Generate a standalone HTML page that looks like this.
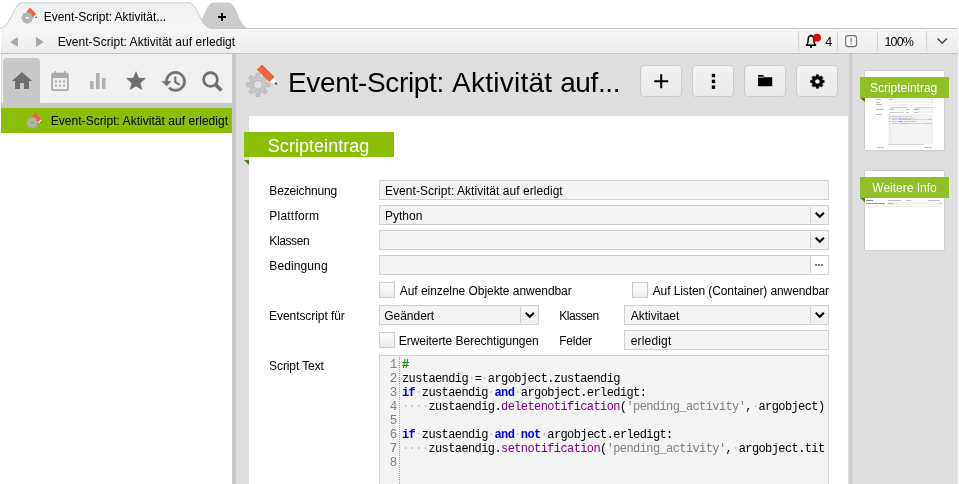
<!DOCTYPE html>
<html>
<head>
<meta charset="utf-8">
<title>Event-Script</title>
<style>
*{box-sizing:border-box;margin:0;padding:0}
html,body{width:959px;height:484px;overflow:hidden;background:#fff}
body{position:relative;font-family:"Liberation Sans",sans-serif;font-size:12px;color:#000}
.abs{position:absolute}
.t{position:absolute;white-space:nowrap;line-height:1}
/* top */
#tabstrip{left:0;top:0;width:959px;height:29px;background:#fff}
#navbar{left:1px;top:29px;width:957px;height:25px;background:linear-gradient(#f7f7f7,#ececec);border-bottom:1px solid #c2c2c2}
.vsep{position:absolute;top:2px;width:1px;height:20px;background:#d2d2d2}
/* sidebar */
#sidebar{left:1px;top:54px;width:231px;height:49px;background:#f0f0f0;border-left:1px solid #e0e0e0}
#hometab{left:3px;top:58px;width:37px;height:45px;background:#c8c8c8;border-radius:4px 4px 0 0}
#sidestrip{left:1px;top:103px;width:231px;height:5px;background:#c8c8c8}
#siderow{left:1px;top:108px;width:231px;height:25px;background:#8cbe08}
#split1{left:232px;top:54px;width:4px;height:430px;background:#c8c8c8}
/* content */
#content{left:236px;top:54px;width:612px;height:430px;background:#dedede}
#panel{left:249px;top:116px;width:599px;height:368px;background:#fff}
#split2{left:848px;top:54px;width:4px;height:430px;background:linear-gradient(to right,#dedede,#c6c6c6)}
#right{left:852px;top:54px;width:106px;height:430px;background:#dedede}
.btn{position:absolute;top:65px;width:42px;height:32px;border:1px solid #cbcbcb;border-radius:4px;background:linear-gradient(#f2f2f2,#e9e9e9)}
.field{position:absolute;height:20px;background:#f4f4f4;border:1px solid #d0d0d0}
.lbl{position:absolute;white-space:nowrap;line-height:14px;font-size:12px}
.cb{position:absolute;width:16px;height:16px;border:1px solid #cdcdcd;background:linear-gradient(#fdfdfd,#ececec)}
.dd{position:absolute;top:1px;right:0;width:18px;height:16px;border-left:1px solid #cfcfcf;background:linear-gradient(#f8f8f8,#eeeeee)}
.green{background:#8cbe08}
#code{position:absolute;left:379px;top:355px;width:450px;height:140px;background:#f4f4f4;border:1px solid #d0d0d0;overflow:hidden}
.ln{position:absolute;left:0;width:17px;text-align:right;color:#808080;font-family:"Liberation Mono",monospace;font-size:12.5px;letter-spacing:-0.3px;line-height:14px;white-space:pre}
.cl{position:absolute;left:22px;font-family:"Liberation Mono",monospace;font-size:12px;letter-spacing:-0.6px;line-height:14px;white-space:pre;color:#000}
.kw{color:#0000ff;font-weight:bold}
.cm{color:#008000;font-weight:bold}
.fn{color:#800080}
.st{color:#808080}
.ws{color:#bdbdbd}
.thumb{position:absolute;left:865px;width:79px;height:79px;background:#fff;box-shadow:0 0 1.5px rgba(0,0,0,.25)}
.thumb i,#th2marks i{position:absolute;display:block}
.thumb i{margin-left:-865px;margin-top:-71px}
.tlabel{position:absolute;left:860.3px;width:88.3px;height:20.9px;background:#90bf2a}
</style>
</head>
<body>
<div id="wrap" style="position:absolute;left:0;top:0;width:959px;height:484px;will-change:transform">
<svg width="0" height="0" style="position:absolute"><defs>
<symbol id="gpbig" viewBox="0 0 40 40">
  <path d="M15.80 17.11 L16.30 13.12 L19.70 13.12 L20.20 17.11 L21.88 17.81 L25.05 15.34 L27.46 17.75 L24.99 20.92 L25.69 22.60 L29.68 23.10 L29.68 26.50 L25.69 27.00 L24.99 28.68 L27.46 31.85 L25.05 34.26 L21.88 31.79 L20.20 32.49 L19.70 36.48 L16.30 36.48 L15.80 32.49 L14.12 31.79 L10.95 34.26 L8.54 31.85 L11.01 28.68 L10.31 27.00 L6.32 26.50 L6.32 23.10 L10.31 22.60 L11.01 20.92 L8.54 17.75 L10.95 15.34 L14.12 17.81 Z M18 20.5 a4.3 4.3 0 1 0 0.01 0 Z" fill="#c6c6c6" stroke="#b2b2b2" stroke-width="0.8" fill-rule="evenodd" stroke-linejoin="round"/>
  <g transform="translate(19.65 7.3) rotate(45)">
    <rect x="0" y="-3.3" width="17.3" height="6.6" fill="#e8683b" stroke="#d5562c" stroke-width="0.7"/>
    <path d="M17.3 -3.3 L25.2 0 L17.3 3.3 Z" fill="#fff"/>
    <path d="M22 -1.35 L25.4 0 L22 1.35 Z" fill="#444"/>
  </g>
</symbol>
<symbol id="gpsm" viewBox="0 0 24 24">
  <g transform="translate(12.4 5.5) rotate(45)">
    <rect x="0" y="-2.4" width="8.9" height="4.8" fill="#e8623a"/>
    <path d="M8.9 -2.4 L11.6 0 L8.9 2.4 Z" fill="#fff"/>
    <path d="M10.3 -1.2 L12 0 L10.3 1.2 Z" fill="#444"/>
  </g>
  <path d="M9.80 9.35 L10.20 8.31 L12.40 8.31 L12.80 9.35 L13.39 9.59 L14.40 9.14 L15.96 10.70 L15.51 11.71 L15.75 12.30 L16.79 12.70 L16.79 14.90 L15.75 15.30 L15.51 15.89 L15.96 16.90 L14.40 18.46 L13.39 18.01 L12.80 18.25 L12.40 19.29 L10.20 19.29 L9.80 18.25 L9.21 18.01 L8.20 18.46 L6.64 16.90 L7.09 15.89 L6.85 15.30 L5.81 14.90 L5.81 12.70 L6.85 12.30 L7.09 11.71 L6.64 10.70 L8.20 9.14 L9.21 9.59 Z M9.5 12.7 h3.6 v2.2 h-3.6 Z" fill="#b2b2b6" stroke="#a8a8ac" stroke-width="0.5" fill-rule="evenodd" stroke-linejoin="round"/>
</symbol>
</defs></svg>
<!-- TAB STRIP -->
<div id="tabstrip" class="abs">
<svg class="abs" style="left:0;top:0" width="959" height="29" viewBox="0 0 959 29">
  <defs><linearGradient id="tg" x1="0" y1="0" x2="0" y2="1"><stop offset="0" stop-color="#efefef"/><stop offset="1" stop-color="#f7f7f7"/></linearGradient></defs>
  <path d="M192 28.5 C204 28.5 204 2.5 214 2.5 L228 2.5 C238 2.5 238 28.5 250 28.5 Z" fill="#cbcbcb"/>
  <path d="M0 28.5 L958 28.5" fill="none" stroke="#c8c8c8" stroke-width="1"/>
  <path d="M-1 29 L-1 28.5 C11 28.5 13 2.5 23 2.5 L188 2.5 C198 2.5 200 28.5 212 28.5 L212 29 Z" fill="url(#tg)"/>
  <path d="M23 2.7 L188 2.7" fill="none" stroke="#dcdcdc" stroke-width="1.4"/>
  <path d="M-1 28.5 C11 28.5 13 2.5 23 2.5" fill="none" stroke="#c6c6c6" stroke-width="1"/>
  <path d="M188 2.5 C198 2.5 200 28.5 212 28.5" fill="none" stroke="#c6c6c6" stroke-width="1"/>
  <path d="M218 17 h8 M222 13 v8" stroke="#000" stroke-width="2" fill="none"/>
</svg>
<svg class="abs" style="left:16.3px;top:4.3px" width="24" height="24"><rect x="9.4" y="12.6" width="3.8" height="2.4" fill="#fff"/><use href="#gpsm"/></svg>
<span class="t" style="left:43.8px;top:10.6px;font-size:12px;letter-spacing:-0.04px">Event-Script: Aktivität...</span>
</div>

<!-- NAV BAR -->
<div id="navbar" class="abs">
<svg class="abs" style="left:0;top:0" width="60" height="24"><path d="M17 8 L9 13 L17 18 Z" fill="#a8a8a8"/><path d="M35 8 L43 13 L35 18 Z" fill="#a8a8a8"/></svg>
<span class="t" style="left:56.7px;top:6.5px;font-size:12px;letter-spacing:0.04px">Event-Script: Aktivität auf erledigt</span>
<div class="vsep" style="left:797px"></div>
<div class="vsep" style="left:836px"></div>
<div class="vsep" style="left:876px"></div>
<div class="vsep" style="left:925px"></div>
<svg class="abs" style="left:803px;top:4px" width="24" height="18" viewBox="804 33 24 18">
  <path d="M805.8 45.2 H816.2" stroke="#000" stroke-width="1.6" fill="none"/>
  <path d="M806.6 45 C808.2 43.6 808.2 41.5 808.2 39.6 C808.2 37 809.5 35.8 811 35.8 C812.5 35.8 813.8 37 813.8 39.6 C813.8 41.5 813.8 43.6 815.4 45" fill="none" stroke="#000" stroke-width="1.5"/>
  <path d="M811 34.8 V36 M811 45.6 V47.7" stroke="#000" stroke-width="2"/>
  <circle cx="817" cy="37.7" r="3.9" fill="#e60000"/>
</svg>
<span class="t" style="left:824.3px;top:6.5px;font-size:12.5px">4</span>
<svg class="abs" style="left:843px;top:5px" width="16" height="16" viewBox="0 0 16 16"><rect x="1.6" y="1.6" width="11" height="11" rx="2.6" fill="#f4f4f4" stroke="#707070" stroke-width="1.1"/><path d="M7.1 4.2 V8" stroke="#707070" stroke-width="1.1"/><rect x="6.5" y="9" width="1.2" height="1.2" fill="#707070"/></svg>
<span class="t" style="left:883.5px;top:6.6px;font-size:12.5px;letter-spacing:-0.85px">100%</span>
<svg class="abs" style="left:934px;top:7px" width="16" height="10" viewBox="0 0 16 10"><path d="M2.5 2.6 L7.2 7.2 L11.9 2.6" fill="none" stroke="#444" stroke-width="1.4"/></svg>
</div>

<!-- SIDEBAR -->
<div id="sidebar" class="abs"></div>
<div id="hometab" class="abs"></div>
<div id="sidestrip" class="abs"></div>
<div id="siderow" class="abs"></div>
<div id="split1" class="abs"></div>
<!-- sidebar icons -->
<svg class="abs" style="left:10px;top:69px" width="24" height="24" viewBox="0 0 24 24"><path d="M10 20v-6h4v6h5v-8h3L12 3 2 12h3v8z" fill="#6e6e6e"/></svg>
<svg class="abs" style="left:50px;top:70px" width="20" height="22" viewBox="0 0 20 22">
  <rect x="1.2" y="2.8" width="17.6" height="18.2" rx="2.2" fill="#aaa"/>
  <rect x="4.6" y="1" width="1.6" height="3" fill="#aaa"/><rect x="14" y="1" width="1.6" height="3" fill="#aaa"/>
  <rect x="3" y="8" width="14" height="11.2" fill="#f0f0f0"/>
  <g fill="#aaa"><rect x="5" y="10.4" width="2" height="2"/><rect x="9" y="10.4" width="2" height="2"/><rect x="13" y="10.4" width="2" height="2"/><rect x="5" y="14.6" width="2" height="2"/><rect x="9" y="14.6" width="2" height="2"/><rect x="13" y="14.6" width="2" height="2"/></g>
</svg>
<svg class="abs" style="left:88px;top:70px" width="20" height="22" viewBox="0 0 20 22"><g fill="#b2b2b2"><rect x="2" y="11" width="3.6" height="8"/><rect x="8" y="3" width="3.6" height="16"/><rect x="14" y="8" width="3.6" height="11"/></g></svg>
<svg class="abs" style="left:124.1px;top:68.9px" width="24" height="24" viewBox="0 0 24 24"><path d="M12 17.27L18.18 21l-1.64-7.03L22 9.24l-7.19-.61L12 2 9.19 8.63 2 9.24l5.46 4.73L5.82 21z" fill="#707070"/></svg>
<svg class="abs" style="left:161.4px;top:67.6px" width="26.8" height="26.8" viewBox="0 0 24 24"><path d="M13 3c-4.97 0-9 4.03-9 9H1l3.89 3.89.07.14L9 12H6c0-3.87 3.13-7 7-7s7 3.13 7 7-3.13 7-7 7c-1.93 0-3.68-.79-4.94-2.06l-1.42 1.42C8.27 19.99 10.51 21 13 21c4.97 0 9-4.03 9-9s-4.03-9-9-9zm-1 5v5l4.28 2.54.72-1.21-3.5-2.08V8H12z" fill="#707070" stroke="#707070" stroke-width="0.55" stroke-linejoin="round"/></svg>
<svg class="abs" style="left:198px;top:67px" width="28" height="28" viewBox="198 67 28 28"><circle cx="210.5" cy="79.5" r="6.9" fill="none" stroke="#707070" stroke-width="2.7"/><path d="M215.4 84.4 L221.4 90.4" stroke="#707070" stroke-width="3.6"/></svg>
<svg class="abs" style="left:21px;top:109px" width="24" height="24"><use href="#gpsm"/></svg>
<span class="t" style="left:50.75px;top:114.8px;font-size:12px;letter-spacing:0.035px">Event-Script: Aktivität auf erledigt</span>

<!-- CONTENT -->
<div id="content" class="abs"></div>
<div id="panel" class="abs"></div>
<div id="split2" class="abs"></div>
<div id="right" class="abs"></div>

<svg class="abs" style="left:240px;top:60px" width="40" height="40"><use href="#gpbig"/></svg>
<span class="t" style="left:288px;top:69px;font-size:28px;letter-spacing:-0.33px">Event-Script:</span><span class="t" style="left:452px;top:69px;font-size:28px;letter-spacing:0.25px">Aktivität</span><span class="t" style="left:560.2px;top:69px;font-size:28px;letter-spacing:-0.4px">auf...</span>

<div class="btn" style="left:640px"><svg class="abs" style="left:0;top:0" width="39" height="30"><path d="M13.2 15.2 h14 M20.2 8.2 v14" stroke="#000" stroke-width="2.1" fill="none"/></svg></div>
<div class="btn" style="left:692px"><svg class="abs" style="left:0;top:0" width="39" height="30"><g fill="#000"><rect x="18.8" y="7.9" width="3.4" height="3.4"/><rect x="18.8" y="13.7" width="3.4" height="3.4"/><rect x="18.8" y="19.5" width="3.4" height="3.4"/></g></svg></div>
<div class="btn" style="left:744px"><svg class="abs" style="left:0;top:0" width="40" height="30" viewBox="745 66 40 30"><path d="M758 75 H763.2 L764.6 77.2 H772.2 V86.2 H758 Z" fill="#000"/><path d="M758 77.1 H764" stroke="#eee" stroke-width="0.9"/></svg></div>
<div class="btn" style="left:796px"><svg class="abs" style="left:0;top:0" width="40" height="30"><path d="M18.90 10.73 L19.35 8.78 L21.45 8.78 L21.90 10.73 L22.71 11.07 L24.41 10.01 L25.89 11.49 L24.83 13.19 L25.17 14.00 L27.12 14.45 L27.12 16.55 L25.17 17.00 L24.83 17.81 L25.89 19.51 L24.41 20.99 L22.71 19.93 L21.90 20.27 L21.45 22.22 L19.35 22.22 L18.90 20.27 L18.09 19.93 L16.39 20.99 L14.91 19.51 L15.97 17.81 L15.63 17.00 L13.68 16.55 L13.68 14.45 L15.63 14.00 L15.97 13.19 L14.91 11.49 L16.39 10.01 L18.09 11.07 Z M20.4 12.9 a2.6 2.6 0 1 0 0.01 0 Z" fill="#000" fill-rule="evenodd" stroke="#000" stroke-width="0.7" stroke-linejoin="round"/></svg></div>

<!-- section label -->
<div class="abs green" style="left:244px;top:132px;width:150px;height:25px"></div>
<svg class="abs" style="left:244px;top:160px" width="5" height="5"><path d="M0 0 H5 V5 Z" fill="#4c7a12"/></svg>
<span class="t" style="left:267.8px;top:136.5px;font-size:18px;color:#fff;letter-spacing:0.04px">Scripteintrag</span>

<!-- form -->
<span class="lbl" style="left:269.3px;top:183.8px;letter-spacing:-0.14px">Bezeichnung</span>
<span class="lbl" style="left:269.3px;top:208.8px;letter-spacing:0.22px">Plattform</span>
<span class="lbl" style="left:269.3px;top:233.8px;letter-spacing:-0.38px">Klassen</span>
<span class="lbl" style="left:269.3px;top:258.8px;letter-spacing:0.11px">Bedingung</span>
<span class="lbl" style="left:269.1px;top:308.8px;letter-spacing:-0.07px">Eventscript für</span>
<span class="lbl" style="left:269.1px;top:358.8px;letter-spacing:-0.1px">Script Text</span>
<div class="field" style="left:379px;top:180px;width:450px"><span class="lbl" style="left:5.0px;top:2.8px;letter-spacing:0.046px">Event-Script: Aktivität auf erledigt</span></div>
<div class="field" style="left:379px;top:205px;width:450px"><span class="lbl" style="left:5.0px;top:2.8px">Python</span><div class="dd"><svg class="abs" style="left:2.5px;top:4.2px" width="12" height="9" viewBox="0 0 12 9"><path d="M1.7 1.8 L5.8 5.8 L9.9 1.8" fill="none" stroke="#000" stroke-width="2"/></svg></div></div>
<div class="field" style="left:379px;top:230px;width:450px"><div class="dd"><svg class="abs" style="left:2.5px;top:4.2px" width="12" height="9" viewBox="0 0 12 9"><path d="M1.7 1.8 L5.8 5.8 L9.9 1.8" fill="none" stroke="#000" stroke-width="2"/></svg></div></div>
<div class="field" style="left:379px;top:255px;width:450px"><div class="abs" style="right:0;top:0;width:17px;height:18px;background:#fff"><svg class="abs" style="left:0;top:0" width="17" height="18" viewBox="811 256 17 18"><g fill="#888"><rect x="815" y="264" width="2" height="2"/><rect x="818" y="264" width="2" height="2"/><rect x="821" y="264" width="2" height="2"/></g></svg></div><div class="abs" style="right:17px;top:1px;width:1px;height:16px;background:#cfcfcf"></div></div>
<div class="cb" style="left:379px;top:282px"></div><span class="lbl" style="left:399.8px;top:283.8px;letter-spacing:-0.052px">Auf einzelne Objekte anwendbar</span>
<div class="cb" style="left:632px;top:282px"></div><span class="lbl" style="left:652.7px;top:283.8px;letter-spacing:-0.1px">Auf Listen (Container) anwendbar</span>
<div class="field" style="left:379px;top:305px;width:160px"><span class="lbl" style="left:4.3px;top:2.8px;letter-spacing:-0.036px">Geändert</span><div class="dd"><svg class="abs" style="left:2.5px;top:4.2px" width="12" height="9" viewBox="0 0 12 9"><path d="M1.7 1.8 L5.8 5.8 L9.9 1.8" fill="none" stroke="#000" stroke-width="2"/></svg></div></div>
<span class="lbl" style="left:559.2px;top:308.8px;letter-spacing:-0.46px">Klassen</span>
<div class="field" style="left:624px;top:305px;width:205px"><span class="lbl" style="left:5.7px;top:2.8px">Aktivitaet</span><div class="dd"><svg class="abs" style="left:2.5px;top:4.2px" width="12" height="9" viewBox="0 0 12 9"><path d="M1.7 1.8 L5.8 5.8 L9.9 1.8" fill="none" stroke="#000" stroke-width="2"/></svg></div></div>
<div class="cb" style="left:379px;top:332px"></div><span class="lbl" style="left:398.8px;top:333.8px;letter-spacing:-0.062px">Erweiterte Berechtigungen</span>
<span class="lbl" style="left:559.2px;top:333.8px;letter-spacing:-0.22px">Felder</span>
<div class="field" style="left:624px;top:330px;width:205px"><span class="lbl" style="left:5.7px;top:2.8px;letter-spacing:0.17px">erledigt</span></div>

<div id="code">
<div class="abs" style="left:19px;top:0;width:1px;height:140px;background:repeating-linear-gradient(#f4f4f4 0,#f4f4f4 1px,#9a9a9a 1px,#9a9a9a 2px)"></div>
<span class="ln" style="top:2px">1</span><span class="cl" style="top:2px"><span class="cm">#</span></span>
<span class="ln" style="top:16px">2</span><span class="cl" style="top:16px">zustaendig<span class="ws">·</span>=<span class="ws">·</span>argobject.zustaendig</span>
<span class="ln" style="top:30px">3</span><span class="cl" style="top:30px"><span class="kw">if</span><span class="ws">·</span>zustaendig<span class="ws">·</span><span class="kw">and</span><span class="ws">·</span>argobject.erledigt:</span>
<span class="ln" style="top:44px">4</span><span class="cl" style="top:44px"><span class="ws">····</span>zustaendig.<span class="fn">deletenotification</span>(<span class="st">'pending_activity'</span>,<span class="ws">·</span>argobject)</span>
<span class="ln" style="top:58px">5</span><span class="cl" style="top:58px"></span>
<span class="ln" style="top:72px">6</span><span class="cl" style="top:72px"><span class="kw">if</span><span class="ws">·</span>zustaendig<span class="ws">·</span><span class="kw">and</span><span class="ws">·</span><span class="kw">not</span><span class="ws">·</span>argobject.erledigt:</span>
<span class="ln" style="top:86px">7</span><span class="cl" style="top:86px"><span class="ws">····</span>zustaendig.<span class="fn">setnotification</span>(<span class="st">'pending_activity'</span>,<span class="ws">·</span>argobject.tit</span>
<span class="ln" style="top:100px">8</span><span class="cl" style="top:100px"></span>
</div>

<!-- THUMBNAILS -->
<div class="thumb" style="top:71px"><i style="left:888px;top:98.4px;width:45px;height:2px;background:#f3f3f3"></i><i style="left:888px;top:101.4px;width:45px;height:2px;background:#f3f3f3"></i><i style="left:888px;top:104.4px;width:45px;height:2px;background:#f3f3f3"></i><i style="left:888px;top:108.4px;width:15px;height:2px;background:#f3f3f3"></i><i style="left:913px;top:108.4px;width:20px;height:2px;background:#f3f3f3"></i><i style="left:913px;top:111.4px;width:20px;height:2px;background:#f3f3f3"></i><i style="left:888px;top:113.6px;width:45px;height:30.4px;background:#f3f3f3"></i><i style="left:875.5px;top:99px;width:5.5px;height:1px;background:#bdbdbd"></i><i style="left:875.5px;top:102px;width:4.5px;height:1px;background:#bdbdbd"></i><i style="left:875.5px;top:104px;width:6px;height:1px;background:#bdbdbd"></i><i style="left:875.5px;top:109px;width:8px;height:1px;background:#bdbdbd"></i><i style="left:875.5px;top:114px;width:6px;height:1px;background:#bdbdbd"></i><i style="left:889px;top:99px;width:3.5px;height:1px;background:#bdbdbd"></i><i style="left:931.5px;top:99px;width:1px;height:1px;background:#bdbdbd"></i><i style="left:931.5px;top:102px;width:1px;height:1px;background:#bdbdbd"></i><i style="left:889.5px;top:107px;width:18px;height:1px;background:#cdcdcd"></i><i style="left:915px;top:107px;width:18px;height:1px;background:#cdcdcd"></i><i style="left:889px;top:109px;width:5px;height:1px;background:#bdbdbd"></i><i style="left:901.5px;top:109.5px;width:1px;height:1px;background:#bdbdbd"></i><i style="left:905.5px;top:109px;width:4.5px;height:1px;background:#bdbdbd"></i><i style="left:913.5px;top:109px;width:5px;height:1px;background:#aaaaaa"></i><i style="left:931.5px;top:109.5px;width:1px;height:1px;background:#bdbdbd"></i><i style="left:889.5px;top:112px;width:14px;height:1px;background:#cdcdcd"></i><i style="left:905.5px;top:112px;width:3.5px;height:1px;background:#bdbdbd"></i><i style="left:913.5px;top:112px;width:4px;height:1px;background:#bdbdbd"></i><i style="left:888.5px;top:114px;width:1px;height:1px;background:#bdbdbd"></i><i style="left:889px;top:116.4px;width:23px;height:1px;background:#cccccc"></i><i style="left:888.5px;top:117.6px;width:1.5px;height:1px;background:#9c9cf8"></i><i style="left:891px;top:117.6px;width:6px;height:1px;background:#cccccc"></i><i style="left:898px;top:117.6px;width:3px;height:1px;background:#9c9cf8"></i><i style="left:902px;top:117.6px;width:12px;height:1px;background:#cccccc"></i><i style="left:892px;top:119.4px;width:6px;height:1px;background:#cccccc"></i><i style="left:898.5px;top:119.4px;width:12px;height:1px;background:#d6b0d6"></i><i style="left:911px;top:119.4px;width:14px;height:1px;background:#d6d6d6"></i><i style="left:926px;top:119.4px;width:6px;height:1px;background:#cccccc"></i><i style="left:888.5px;top:121.2px;width:1.5px;height:1px;background:#9c9cf8"></i><i style="left:891px;top:121.2px;width:6px;height:1px;background:#cccccc"></i><i style="left:898px;top:121.2px;width:5px;height:1px;background:#9c9cf8"></i><i style="left:904px;top:121.2px;width:12px;height:1px;background:#cccccc"></i><i style="left:892px;top:123.2px;width:6px;height:1px;background:#cccccc"></i><i style="left:898.5px;top:123.2px;width:10px;height:1px;background:#d6b0d6"></i><i style="left:909px;top:123.2px;width:14px;height:1px;background:#d6d6d6"></i><i style="left:924px;top:123.2px;width:8px;height:1px;background:#cccccc"></i><i style="left:888.5px;top:124.4px;width:1px;height:1px;background:#bdbdbd"></i><i style="left:889.5px;top:126px;width:0.6px;height:16px;background:#e4e4e4"></i><i style="left:888px;top:144px;width:36px;height:1.2px;background:#d6d6d6"></i><i style="left:877px;top:147px;width:7px;height:1px;background:#bdbdbd"></i><i style="left:924px;top:147px;width:8px;height:1px;background:#bdbdbd"></i></div>
<div class="thumb" style="top:171px"></div>
<div class="abs" id="th2marks"><i style="left:887px;top:202px;width:56px;height:3px;background:#f3f3f3"></i><i style="left:866px;top:200px;width:7px;height:1px;background:#8c8c8c"></i><i style="left:888px;top:200px;width:12.5px;height:1px;background:#bdbdbd"></i><i style="left:906px;top:200px;width:4.5px;height:1px;background:#bdbdbd"></i><i style="left:928px;top:200px;width:12px;height:1px;background:#bdbdbd"></i><i style="left:866px;top:203px;width:19px;height:1px;background:#9a9a9a"></i><i style="left:888px;top:203px;width:6px;height:1px;background:#bdbdbd"></i><i style="left:939px;top:203px;width:1px;height:1px;background:#bdbdbd"></i><i style="left:941px;top:203px;width:1px;height:1px;background:#bdbdbd"></i><i style="left:866px;top:205.6px;width:77px;height:0.6px;background:#ececec"></i></div>
<div class="tlabel" style="top:77.3px"><span class="t" style="left:9.6px;top:4.6px;font-size:12px;color:#fff">Scripteintrag</span></div>
<svg class="abs" style="left:860px;top:98px" width="5" height="4"><path d="M0 0 H5 V4 Z" fill="#4c7a12"/></svg>
<div class="tlabel" style="top:177.3px"><span class="t" style="left:12px;top:4.6px;font-size:12px;color:#fff">Weitere Info</span></div>
<svg class="abs" style="left:860px;top:198px" width="5" height="4"><path d="M0 0 H5 V4 Z" fill="#4c7a12"/></svg>
</div>
</body>
</html>
